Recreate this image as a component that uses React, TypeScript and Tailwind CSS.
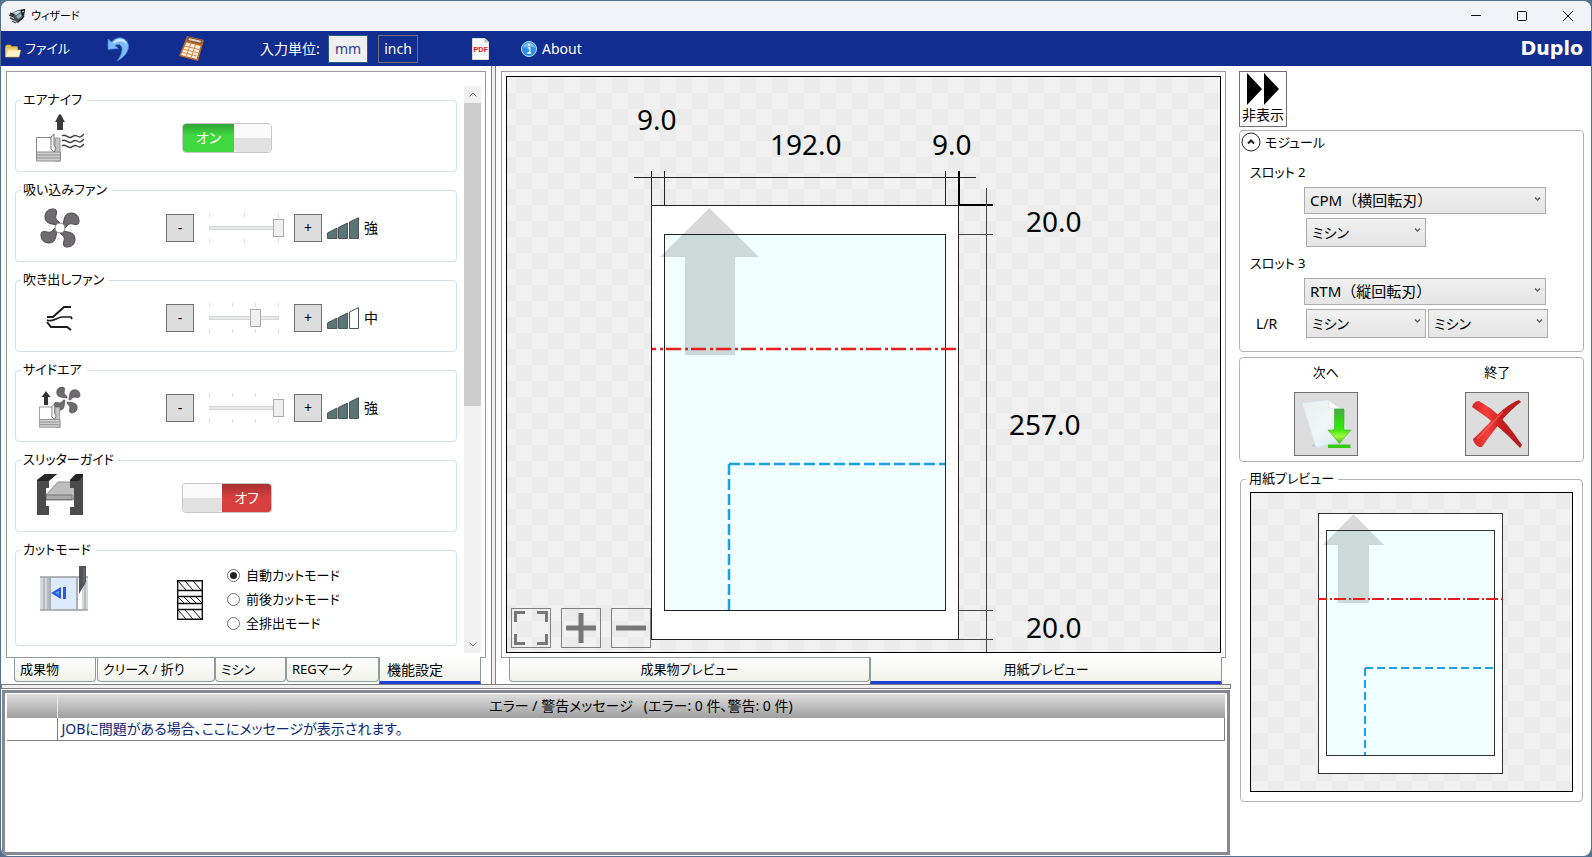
import clsx from "clsx";
import type { ReactNode } from "react";

const CHECKER =
	"bg-[conic-gradient(#ebebeb_25%,#f1f1f1_0_50%,#ebebeb_0_75%,#f1f1f1_0)] bg-[length:32px_32px]";

/* ---------- icons ---------- */

function AppIcon() {
	return (
		<svg width="17" height="16" viewBox="0 0 17 16">
			<path d="M1 6 9 2l7-1-1 8-6 6-5-2-3-4z" fill="#4b5256" />
			<path d="M4 5l6-2.500 2 1.500-5 3z" fill="#c9dde6" />
			<path d="M7 8l5-3 1 3-4 3z" fill="#8fb0bf" />
			<path d="M12 2l4-1-1 6-2 1z" fill="#111" />
			<path d="M0 7l4 2M1 10l4 2M3 13l4 2M1 5l4 2M9 14l5-4M12 12l3-4" stroke="#111" />
			<path d="M1 8.500l4 2M3 12l4 2M13 4l2-1" stroke="#e5e5e5" />
		</svg>
	);
}

function FolderIcon() {
	return (
		<svg width="16" height="14" viewBox="0 0 16 14">
			<path d="M.5 2.500 1.500 1h4l1 1.500h6V5H.5z" fill="#e9c65c" stroke="#c99a2e" strokeWidth=".6" />
			<path d="M.5 13V4h12v2h3L14 13z" fill="#f3d887" stroke="#d8ad44" strokeWidth=".7" />
			<path d="M1 12.500 3.500 6.500h12L13.500 12.500z" fill="#fdf3c6" />
		</svg>
	);
}

function UndoIcon() {
	return (
		<svg width="22" height="26" viewBox="0 0 22 26">
			<path
				d="M1 3 1 13.500 11.500 12.500 8 9.500c4-2.500 7.500 0 7 4.500-.3 4-2 7-5 11 6-3 11-8 11.500-14C22 3 12-2.500 4.500 6z"
				fill="#7dbdf5"
				stroke="#3f83d9"
				strokeWidth=".7"
			/>
			<path d="M6 6.500c5-6 13-4 14 2-3-4-8-4.500-13-1z" fill="#d4ebff" />
		</svg>
	);
}

function CalculatorIcon() {
	return (
		<svg width="26" height="26" viewBox="0 0 26 26">
			<path d="M8 0l17 4-6 21L0 20z" fill="#c0682a" />
			<path d="M9 1l14 3.200L22 8 8 4.500z" fill="#7a4a28" />
			<path d="M10 2l12 2.700-.5 2L9.300 4z" fill="#cfd6cf" />
			<path d="M7.500 6.500 21.500 10 17.500 23 2 19z" fill="#fdf1dd" />
			<path
				d="M5.800 10l14.500 3.600M4.500 13.200l14.500 3.600M3.200 16.400l14.500 3.600M11.800 7.700 7 20.500M16.500 9l-4.500 13"
				stroke="#d48a4a"
			/>
		</svg>
	);
}

function PdfIcon() {
	return (
		<svg width="17" height="22" viewBox="0 0 17 22">
			<path d="M.5.5H13L16.500 4v17.500H.5z" fill="#fafafa" stroke="#ddd" />
			<path d="M12.500.5V4.500h4z" fill="#bbb" />
			<text
				x="8.500"
				y="14"
				textAnchor="middle"
				fontSize="8"
				fontWeight="700"
				fontFamily="Roboto, sans-serif"
				fill="#ee1c25"
			>
				PDF
			</text>
		</svg>
	);
}

function InfoIcon() {
	return (
		<svg width="16" height="16" viewBox="0 0 16 16">
			<circle cx="8" cy="8" r="7.500" fill="#2f8ee6" stroke="#bfe0ff" />
			<path d="M2 7a6 5 0 0 1 12 0c-3-2-9-2-12 0z" fill="#7fc0f7" />
			<circle cx="8" cy="4.200" r="1.100" fill="#fff" />
			<path d="M6.500 6.800h2.300v5M6.300 12h3.900" stroke="#fff" strokeWidth="1.300" fill="none" />
		</svg>
	);
}

function FanBlades({ hub }: { hub?: boolean }) {
	return (
		<g>
			{[0, 90, 180, 270].map((angle) => (
				<path
					key={angle}
					transform={`rotate(${angle})`}
					d="M0-3C-6-4-15-3-15-11c0-6 4-8 8-8 4 0 4 3 3 6-1 4 1 5 4 8z"
					fill="#6d6b6d"
					stroke="#4a484a"
				/>
			))}
			{hub && <circle r="5" fill="#fff" stroke="#8a888a" />}
		</g>
	);
}

function PaperStack() {
	return (
		<g>
			<path d="M.5 3.500h16M.5 3.500V18" stroke="#888" fill="none" />
			<path d="M19 4h5v23h-5z" fill="#c4c4c4" stroke="#999" />
			<path d="M.5 18h24v9H.5z" fill="#cfcfcf" stroke="#8c8c8c" />
			<path d="M1 21h23M1 24h23" stroke="#8c8c8c" />
			<path d="M15 3l3-3v11l2 3-2 4-3-3z" fill="#f4f4f4" stroke="#777" />
		</g>
	);
}

function AirKnifeIcon() {
	return (
		<svg width="48" height="48" viewBox="0 0 48 48">
			<path d="M24 0c2 1 3 5 5 8h-2v8h-6V8h-2c2-3 3-7 5-8z" fill="#3a3a3a" />
			<g transform="translate(0 20)">
				<PaperStack />
			</g>
			{[22, 27, 32].map((y) => (
				<path
					key={y}
					d={`M26 ${y}c3-3 5 2 8 1.500s4-3.500 7-1.500 4 1 7-2`}
					fill="none"
					stroke="#444"
					strokeWidth="1.500"
				/>
			))}
		</svg>
	);
}

function FanIcon() {
	return (
		<svg width="40" height="40" viewBox="-20 -20 40 40">
			<FanBlades hub />
		</svg>
	);
}

function BlowIcon() {
	return (
		<svg width="28" height="26" viewBox="0 0 28 26" fill="none" stroke="#1c1c1c">
			<path d="M1 12h6L18 2h7" strokeWidth="2" />
			<path d="M1 15c5 3 10-3 15-3h9l1 2" strokeWidth="1.700" />
			<path d="M1 17l4 5h16l4 3" strokeWidth="2" />
		</svg>
	);
}

function SideAirIcon() {
	return (
		<svg width="42" height="42" viewBox="0 0 42 42">
			<g transform="translate(28 13) scale(.68)">
				<FanBlades />
			</g>
			<path d="M7 4l4.500 6H9v8H5v-8H2.500z" fill="#333" />
			<path d="M0 20h16v20H0z" fill="#fff" />
			<g transform="translate(0 17) scale(.86)">
				<PaperStack />
			</g>
		</svg>
	);
}

function SlitterGuideIcon() {
	return (
		<svg width="46" height="48" viewBox="0 0 46 48">
			<path d="M21 8h18v10l-3 8H9v-5z" fill="#bdbdbd" stroke="#8d8d8d" />
			<path d="M9 21h26v4.500H9z" fill="#a9a9a9" stroke="#777" />
			<path d="M0 6l8-6h12l-8 6v8H9v18h3v9H0z" fill="#4b4b4b" />
			<path d="M0 6l8-6h12l-8 7H0z" fill="#262626" />
			<path d="M46 0v41H33v-8h4V14h-4V6l6-6z" fill="#4b4b4b" />
			<path d="M39 0h7v2l-4 5h-9V6z" fill="#262626" />
		</svg>
	);
}

function CutModeIcon() {
	return (
		<svg width="48" height="46" viewBox="0 0 48 46">
			<path d="M0 11h48v33H0z" fill="#d5d9dd" />
			<path d="M10 12h27v31H10z" fill="#dcebfb" />
			<path d="M4 12v31M8 12v31M45 12v31" stroke="#9aa0a6" />
			<path d="M38 12h4v31h-4z" fill="#fff" />
			<path d="M0 11h48M0 44h48M10 12v31M37 12v31" stroke="#9a9da3" strokeWidth="1.500" />
			<path d="M11 27l10-6v12z" fill="#2f57ea" />
			<path d="M15 27l4-2v4z" fill="#45b0c8" />
			<path d="M23 21h3v12h-3z" fill="#3157f0" />
			<path d="M39 0h7v16l-7 12z" fill="#4f5257" />
			<path d="M44 2v15" stroke="#777" />
		</svg>
	);
}

function HatchIcon() {
	return (
		<svg width="26" height="40" viewBox="0 0 26 40" fill="none" stroke="#111">
			<path d="M.7.700h24.600v38.600H.7z" strokeWidth="1.400" />
			<path d="M1 10.500h24M1 16.500h24M1 23.500h24M1 29.500h24" strokeWidth="1.400" />
			<path d="M1 1l8 9M8 1l8 9M16 1l8 9M1 17l6 6M7 17l6 6M13 17l6 6M19 17l6 6M1 30l8 9M8 30l8 9M16 30l8 9" />
		</svg>
	);
}

function LevelIcon({ level }: { level: number }) {
	const bars = ["M.5 16 10 11v10.500H.5z", "M11.500 10.500 20.500 6v15.500h-9z", "M22.500 5 31.500.7v20.800h-9z"];
	return (
		<svg width="32" height="22" viewBox="0 0 32 22">
			{bars.map((d, i) => (
				<path key={d} d={d} fill={i < level ? "#5a7575" : "#fff"} stroke="#4c5555" />
			))}
		</svg>
	);
}

function NextIcon() {
	return (
		<svg width="50" height="50" viewBox="0 0 50 50">
			<defs>
				<linearGradient id="next-arrow" x1="0" y1="0" x2="0" y2="1">
					<stop offset="0" stopColor="#4aa548" />
					<stop offset=".4" stopColor="#2fe00c" />
					<stop offset=".6" stopColor="#3fe812" />
					<stop offset=".8" stopColor="#a4f83a" />
					<stop offset="1" stopColor="#2fc010" />
				</linearGradient>
				<linearGradient id="next-page" x1="0" y1="0" x2="1" y2="1">
					<stop offset="0" stopColor="#e9eeef" />
					<stop offset=".5" stopColor="#f1f6f7" />
					<stop offset="1" stopColor="#cfe6f2" />
				</linearGradient>
			</defs>
			<path d="M10 47l6-4v6z" fill="#c6c9ca" />
			<path d="M1 4 27 .700 40 10l8 29-33 10z" fill="url(#next-page)" stroke="#cfe4ec" strokeWidth=".7" />
			<path d="M27 .700 28.500 9 40 10z" fill="#fff" stroke="#c9dfe6" strokeWidth=".7" />
			<path d="M33.500 10h9.500v21h7L38.500 44.500 27 31h6.500z" fill="url(#next-arrow)" stroke="#3bb51f" strokeWidth=".6" />
			<path d="M27 45.500h22.500v3.500H27z" fill="#37c914" />
		</svg>
	);
}

function CloseJobIcon() {
	return (
		<svg width="50" height="48" viewBox="0 0 50 48">
			<defs>
				<linearGradient id="quit-red" x1="0" y1="0" x2="1" y2="0">
					<stop offset="0" stopColor="#d62626" />
					<stop offset=".3" stopColor="#f2403c" />
					<stop offset=".6" stopColor="#c41e1e" />
					<stop offset="1" stopColor="#b01c1c" />
				</linearGradient>
			</defs>
			<path d="M0 7c1-3 3-6 7-6 6 4 14 8 21 16 9 9 15 18 22 28l-2 3C41 41 34 33 25 26 16 18 9 13 0 7z" fill="url(#quit-red)" />
			<path d="M1 39c5-4 13-13 19-19C29 11 38 3 47 0l2 2c-7 5-13 11-18 17C23 29 17 37 10 47c-4 1-8-3-9-8z" fill="url(#quit-red)" />
			<path d="M5 39C14 31 22 20 31 12" stroke="#ff7168" strokeWidth="1.500" fill="none" opacity=".6" />
		</svg>
	);
}

/* ---------- small controls ---------- */

function GroupBox({
	title,
	className,
	children,
}: {
	title: string;
	className?: string;
	children: ReactNode;
}) {
	return (
		<fieldset className={clsx("min-w-0 rounded border border-[#d3dee6]", className)}>
			<legend className="ml-[5px] h-5 pr-[5px] pl-[2px] text-[13px] leading-[18px]">{title}</legend>
			{children}
		</fieldset>
	);
}

function SettingRow({
	title,
	icon,
	children,
}: {
	title: string;
	icon: ReactNode;
	children: ReactNode;
}) {
	return (
		<GroupBox title={title} className="h-[82px]">
			<div className="flex h-[55px] items-center">
				<div className="flex w-[88px] shrink-0 justify-center">{icon}</div>
				{children}
			</div>
		</GroupBox>
	);
}

function Toggle({ on, label }: { on: boolean; label: string }) {
	return (
		<button
			type="button"
			role="switch"
			aria-checked={on}
			aria-label={label}
			className="ml-[78px] flex h-[30px] w-[90px] overflow-hidden rounded border border-[#c8c8c8] text-white"
		>
			{on && (
				<span className="flex h-full w-[51px] items-center justify-center bg-linear-to-b from-[#2ea232] via-[#40d840] via-40% to-[#40d840]">
					オン
				</span>
			)}
			<span className="h-full flex-1 rounded-sm bg-linear-to-b from-[#fbfbfb] from-50% to-[#e2e2e2] to-50%" />
			{!on && (
				<span className="flex h-full w-[49px] items-center justify-center bg-linear-to-b from-[#a83030] via-[#d84040] via-50% to-[#d84040]">
					オフ
				</span>
			)}
		</button>
	);
}

function StepButton({ label, children }: { label: string; children: string }) {
	return (
		<button
			type="button"
			aria-label={label}
			className="h-7 w-7 border border-[#707070] bg-[#dddddd] text-sm leading-6"
		>
			{children}
		</button>
	);
}

function LevelSlider({
	label,
	max,
	value,
	level,
	text,
}: {
	label: string;
	max: number;
	value: number;
	level: number;
	text: string;
}) {
	const ticks = Array.from({ length: max + 1 }, (_, i) => 5.500 + Math.round((69 * i) / max));
	return (
		<div className="ml-[62px] flex items-center">
			<StepButton label={`${label} -`}>-</StepButton>
			<div className="relative mx-[10px] h-[30px] w-20">
				<svg className="absolute inset-0" width="80" height="30" viewBox="0 0 80 30">
					{ticks.map((x) => (
						<path key={x} d={`M${x} 0v4M${x} 26v4`} stroke="#dedede" />
					))}
					<rect x="5.500" y="13.500" width="69" height="3" fill="#e7eaea" stroke="#d6d6d6" />
				</svg>
				<input
					type="range"
					aria-label={label}
					min={0}
					max={max}
					defaultValue={value}
					className="absolute inset-0 m-0 h-[30px] w-20 appearance-none bg-transparent [&::-webkit-slider-thumb]:h-[18px] [&::-webkit-slider-thumb]:w-[11px] [&::-webkit-slider-thumb]:appearance-none [&::-webkit-slider-thumb]:border [&::-webkit-slider-thumb]:border-[#acacac] [&::-webkit-slider-thumb]:bg-[#f0f0f0]"
				/>
			</div>
			<StepButton label={`${label} +`}>+</StepButton>
			<div className="mx-[5px]">
				<LevelIcon level={level} />
			</div>
			<span>{text}</span>
		</div>
	);
}

function ComboBox({
	label,
	value,
	className,
}: {
	label: string;
	value: string;
	className: string;
}) {
	return (
		<div className={clsx("relative", className)}>
			<select
				aria-label={label}
				defaultValue={value}
				className="h-full w-full appearance-none border border-[#acacac] bg-linear-to-b from-[#f0f0f0] to-[#e5e5e5] pl-[5px]"
			>
				<option>{value}</option>
			</select>
			<svg
				className="pointer-events-none absolute top-[9px] right-[5px]"
				width="7"
				height="6"
				viewBox="0 0 7 6"
				fill="none"
				stroke="#606060"
				strokeWidth="1.400"
			>
				<path d="M1 1.500l2.500 2.500L6 1.500" />
			</svg>
		</div>
	);
}

function TabButton({
	active,
	className,
	children,
}: {
	active?: boolean;
	className: string;
	children: string;
}) {
	return (
		<button
			type="button"
			role="tab"
			aria-selected={!!active}
			className={clsx(
				"border-x bg-linear-to-b from-white to-[#f0f2ea]",
				active
					? "relative -mt-px h-[27px] border-b-[3px] border-x-[#919b9c] border-b-[#1c3fd6] pt-px"
					: "h-6 rounded-b border-b border-[#919b9c]",
				className,
			)}
		>
			{children}
		</button>
	);
}

/* ---------- sections ---------- */

function TitleBar() {
	return (
		<header className="flex h-[30px] shrink-0 items-center bg-[#f1f3f9] pl-2 text-[11px]">
			<AppIcon />
			<h1 className="ml-[5px]">ウィザード</h1>
			<div className="ml-auto flex h-full">
				<button type="button" aria-label="最小化" className="flex w-[46px] items-center justify-center">
					<svg width="10" height="10" stroke="#111">
						<path d="M0 4.500h10" />
					</svg>
				</button>
				<button type="button" aria-label="最大化" className="flex w-[46px] items-center justify-center">
					<svg width="10" height="10" fill="none" stroke="#111">
						<rect x=".5" y=".5" width="9" height="9" rx="1" />
					</svg>
				</button>
				<button type="button" aria-label="閉じる" className="flex w-[46px] items-center justify-center">
					<svg width="10" height="10" stroke="#111">
						<path d="M0 0l10 10M10 0L0 10" />
					</svg>
				</button>
			</div>
		</header>
	);
}

function Toolbar() {
	return (
		<nav className="flex h-[35px] shrink-0 items-center bg-[#112d8f] pr-2 pl-1 text-white">
			<button type="button" className="flex w-[102px] items-center gap-1 text-[13px]">
				<span className="pt-1">
					<FolderIcon />
				</span>
				ファイル
			</button>
			<button type="button" aria-label="元に戻す" className="w-[72px]">
				<UndoIcon />
			</button>
			<button type="button" aria-label="電卓" className="w-[81px]">
				<CalculatorIcon />
			</button>
			<span className="w-[68px]">入力単位:</span>
			<button type="button" className="h-7 w-10 border border-[#2c5a8a] bg-[#f0f0f0] text-[#2b3f95]">
				mm
			</button>
			<button type="button" className="ml-[10px] h-7 w-10 border border-[#707070]">
				inch
			</button>
			<button type="button" aria-label="PDF" className="ml-[54px]">
				<PdfIcon />
			</button>
			<button type="button" className="ml-8 flex items-center gap-[5px]">
				<InfoIcon />
				About
			</button>
			<span className="ml-auto font-['DejaVu_Sans'] text-[19px] font-bold">Duplo</span>
		</nav>
	);
}

const cutModes = ["自動カットモード", "前後カットモード", "全排出モード"];

function SettingsPane() {
	return (
		<section className="flex w-[490px] shrink-0 flex-col px-[5px] pt-[5px]">
			<div className="flex min-h-0 flex-1 overflow-hidden border border-[#919b9c] pr-1 pl-2">
				<div className="flex flex-1 flex-col gap-2 pt-[18px]">
					<SettingRow title="エアナイフ" icon={<AirKnifeIcon />}>
						<Toggle on label="エアナイフ" />
					</SettingRow>
					<SettingRow title="吸い込みファン" icon={<FanIcon />}>
						<LevelSlider label="吸い込みファン" max={2} value={2} level={3} text="強" />
					</SettingRow>
					<SettingRow title="吹き出しファン" icon={<BlowIcon />}>
						<LevelSlider label="吹き出しファン" max={3} value={2} level={2} text="中" />
					</SettingRow>
					<SettingRow title="サイドエア" icon={<SideAirIcon />}>
						<LevelSlider label="サイドエア" max={3} value={3} level={3} text="強" />
					</SettingRow>
					<SettingRow title="スリッターガイド" icon={<SlitterGuideIcon />}>
						<Toggle on={false} label="スリッターガイド" />
					</SettingRow>
					<GroupBox title="カットモード" className="h-[106px]">
						<div className="flex pl-6">
							<div className="pt-[6px]">
								<CutModeIcon />
							</div>
							<div className="ml-[89px] pt-5">
								<HatchIcon />
							</div>
							<div className="ml-6 pt-[3px] text-[13px]">
								{cutModes.map((mode, i) => (
									<label key={mode} className="flex h-6 items-center gap-[6px]">
										<input
											type="radio"
											name="cutMode"
											defaultChecked={i === 0}
											className="flex h-[13px] w-[13px] appearance-none items-center justify-center rounded-full border border-[#707070] bg-white checked:before:h-[7px] checked:before:w-[7px] checked:before:rounded-full checked:before:bg-[#212121]"
										/>
										{mode}
									</label>
								))}
							</div>
						</div>
					</GroupBox>
				</div>
				<div className="mt-[14px] mb-1 ml-[7px] flex w-[17px] flex-col bg-[#f0f0f0]">
					<button type="button" aria-label="上へ" className="flex h-[17px] items-center justify-center">
						<svg width="8" height="5" fill="none" stroke="#888">
							<path d="M.5 4.500 4 1l3.500 3.500" />
						</svg>
					</button>
					<div className="h-[303px] bg-[#cdcdcd]" />
					<button type="button" aria-label="下へ" className="mt-auto flex h-[17px] items-center justify-center">
						<svg width="8" height="5" fill="none" stroke="#888">
							<path d="M.5.5 4 4 7.500.5" />
						</svg>
					</button>
				</div>
			</div>
			<div role="tablist" className="flex h-[26px] shrink-0 pl-2 text-[13px]">
				<TabButton className="w-[82px] pl-[5px] text-left">成果物</TabButton>
				<TabButton className="ml-px w-[118px] pl-[5px] text-left">クリース / 折り</TabButton>
				<TabButton className="w-[71px] pl-[5px] text-left">ミシン</TabButton>
				<TabButton className="w-[93px] pl-[5px] text-left">REGマーク</TabButton>
				<TabButton active className="w-[102px] pl-[7px] text-left text-sm">
					機能設定
				</TabButton>
			</div>
		</section>
	);
}

function SheetDrawing() {
	return (
		<svg
			className="pointer-events-none absolute inset-0 h-full w-full"
			viewBox="0 0 713 575"
			fill="none"
			stroke="#222"
		>
			<rect x="144.500" y="128.500" width="307" height="434" fill="#fff" />
			<rect x="157.500" y="157.500" width="281" height="376" fill="#f0ffff" />
			<path d="M127 100.500h342M144.500 94v34M157.500 94v34M438.500 94v34" />
			<path d="M452 94v34h34" stroke="#000" strokeWidth="2" />
			<path d="M479.500 111v464M452 157.500h34M452 533.500h34M452 562.500h34" stroke="#444" />
			<path d="M202.500 131 252 180h-24v98h-50v-98h-25z" fill="#000" fillOpacity=".15" stroke="none" />
			<path d="M145 272h307" stroke="#e81c1c" strokeWidth="2.500" strokeDasharray="15 4 3 3" strokeDashoffset="11" />
			<path d="M222 387v146M222 387h216" stroke="#1ba1e6" strokeWidth="2.500" strokeDasharray="11 4" />
			<g fill="#000" stroke="none" fontSize="28" fontFamily="'Noto Sans', sans-serif">
				<text x="130" y="53">9.0</text>
				<text x="263" y="78">192.0</text>
				<text x="425" y="78">9.0</text>
				<text x="519" y="155">20.0</text>
				<text x="502" y="358">257.0</text>
				<text x="519" y="561">20.0</text>
			</g>
		</svg>
	);
}

function SheetThumbnail() {
	return (
		<svg className="h-full w-full" viewBox="0 0 321 298" fill="none" stroke="#333">
			<rect x="67.500" y="20.500" width="184" height="260" fill="#fff" />
			<rect x="75.500" y="37.500" width="168" height="225" fill="#f0ffff" />
			<path d="M102.500 21 133 52h-15v58H87V52H72z" fill="#000" fillOpacity=".15" stroke="none" />
			<path d="M67 106h185" stroke="#e81c1c" strokeWidth="2" strokeDasharray="12 3 2 2" strokeDashoffset="3" />
			<path d="M114 175v87M114 175h130" stroke="#1ba1e6" strokeWidth="2" strokeDasharray="8 4" />
		</svg>
	);
}

const viewButton = "flex h-10 w-10 items-center justify-center border border-[#808080]";

function PreviewPane() {
	return (
		<section className="flex min-w-0 flex-1 flex-col px-[5px] pt-[5px]">
			<div className="flex min-h-0 flex-1 border border-[#919b9c] p-1">
				<div className={clsx("relative flex-1 border border-black bg-[position:-7px_0px]", CHECKER)}>
					<div className="absolute bottom-1 left-1 flex gap-[10px]">
						<button type="button" aria-label="全体表示" className={viewButton}>
							<svg width="34" height="34" fill="none" stroke="#777" strokeWidth="3">
								<path d="M1.500 11V1.500H11M23 1.500h9.500V11M32.500 23v9.500H23M11 32.500H1.500V23" />
							</svg>
						</button>
						<button type="button" aria-label="拡大" className={viewButton}>
							<svg width="30" height="30" stroke="#777" strokeWidth="5">
								<path d="M0 15h30M15 0v30" />
							</svg>
						</button>
						<button type="button" aria-label="縮小" className={viewButton}>
							<svg width="30" height="30" stroke="#777" strokeWidth="5">
								<path d="M0 15h30" />
							</svg>
						</button>
					</div>
					<SheetDrawing />
				</div>
			</div>
			<div role="tablist" className="flex h-[26px] shrink-0 pr-1 pl-2 text-[13px]">
				<TabButton className="w-[361px] shrink">成果物プレビュー</TabButton>
				<TabButton active className="flex-1">
					用紙プレビュー
				</TabButton>
			</div>
		</section>
	);
}

function MessagePane() {
	return (
		<section className="m-px mt-px h-[165px] shrink-0 border-[3px] border-[#858993] px-[2px] pt-px text-sm">
			<table className="w-full table-fixed border-collapse">
				<thead>
					<tr className="h-6 bg-linear-to-b from-[#dedede] to-[#a0a0a0]">
						<th className="w-[50px] border-r border-[#e8e8e8]" />
						<th className="p-0 leading-5 font-normal whitespace-pre">
							エラー / 警告メッセージ   (エラー: 0 件、警告: 0 件)
						</th>
					</tr>
				</thead>
				<tbody>
					<tr className="h-[22px]">
						<td className="border-r border-b border-[#808080]" />
						<td className="border-r border-b border-[#808080] p-0 pl-1 leading-5 text-[#0c2577]">
							JOBに問題がある場合、ここにメッセージが表示されます。
						</td>
					</tr>
				</tbody>
			</table>
		</section>
	);
}

function SidePane() {
	return (
		<aside className="w-[360px] shrink-0 pt-[5px] pr-[7px] pl-2">
			<button
				type="button"
				className="flex h-14 w-12 flex-col items-center border border-[#707070] pt-px"
			>
				<svg width="32" height="32" viewBox="0 0 32 32">
					<path d="M0 0l15 16L0 32zM17 0l15 16-15 16z" />
				</svg>
				<span className="leading-5">非表示</span>
			</button>

			<section className="mt-[3px] h-[222px] rounded border border-[#b4b4b4]">
				<button
					type="button"
					aria-expanded="true"
					className="flex h-[22px] items-center gap-1 pl-px text-[13px]"
				>
					<svg width="20" height="20" viewBox="0 0 20 20" fill="none" stroke="#222">
						<circle cx="10" cy="10" r="9" />
						<path d="M7 11.500l3-3 3 3" strokeWidth="2" />
					</svg>
					モジュール
				</button>
				<p className="mt-[9px] h-5 pl-[10px] text-[13px] leading-5">スロット 2</p>
				<ComboBox
					label="スロット 2"
					value="CPM（横回転刃）"
					className="mt-[5px] ml-16 h-[27px] w-[242px] text-[15px] [font-feature-settings:normal]"
				/>
				<ComboBox label="スロット 2 機能" value="ミシン" className="mt-1 ml-[66px] h-[29px] w-[120px]" />
				<p className="mt-[6px] h-5 pl-[10px] text-[13px] leading-5">スロット 3</p>
				<ComboBox
					label="スロット 3"
					value="RTM（縦回転刃）"
					className="mt-[5px] ml-16 h-[27px] w-[242px] text-[15px] [font-feature-settings:normal]"
				/>
				<div className="mt-1 flex items-center gap-[2px] pl-4">
					<span className="w-12">L/R</span>
					<ComboBox label="スロット 3 L" value="ミシン" className="h-[29px] w-[120px]" />
					<ComboBox label="スロット 3 R" value="ミシン" className="h-[29px] w-[120px]" />
				</div>
			</section>

			<section className="mt-[5px] grid h-[105px] grid-cols-2 content-start justify-items-center gap-y-[10px] rounded border border-[#b4b4b4] pt-1 text-[13px]">
				<label htmlFor="next" className="h-5 leading-5">
					次へ
				</label>
				<label htmlFor="quit" className="h-5 leading-5">
					終了
				</label>
				<button
					id="next"
					type="button"
					className="flex h-16 w-16 items-center justify-center border border-[#707070] bg-[#dddddd]"
				>
					<NextIcon />
				</button>
				<button
					id="quit"
					type="button"
					className="flex h-16 w-16 items-center justify-center border border-[#707070] bg-[#dddddd]"
				>
					<CloseJobIcon />
				</button>
			</section>

			<fieldset className="mt-[7px] mr-px ml-px min-w-0 rounded border border-[#b4b4b4] px-[9px] pb-[9px]">
				<legend className="-ml-1 h-5 pr-1 pl-[3px] text-[13px] leading-[18px]">用紙プレビュー</legend>
				<div className={clsx("mt-[3px] h-[300px] border border-black bg-[position:1px_0px]", CHECKER)}>
					<SheetThumbnail />
				</div>
			</fieldset>
		</aside>
	);
}

export default function App() {
	return (
		<div className="h-screen bg-[#54718e] p-px font-['Noto_Sans','Noto_Sans_CJK_JP',sans-serif] text-sm text-black [font-feature-settings:'palt']">
			<div className="flex h-full flex-col overflow-hidden rounded-lg bg-white">
				<TitleBar />
				<Toolbar />
				<main className="flex min-h-0 flex-1">
					<div className="flex min-w-0 flex-1 flex-col">
						<div className="flex min-h-0 flex-1">
							<SettingsPane />
							<div className="w-[5px] shrink-0 border-x border-[#808080] bg-[#f0f0f0]" />
							<PreviewPane />
						</div>
						<div className="h-[5px] shrink-0 border border-[#808080] bg-[#f0f0f0]" />
						<MessagePane />
					</div>
					<SidePane />
				</main>
			</div>
		</div>
	);
}
